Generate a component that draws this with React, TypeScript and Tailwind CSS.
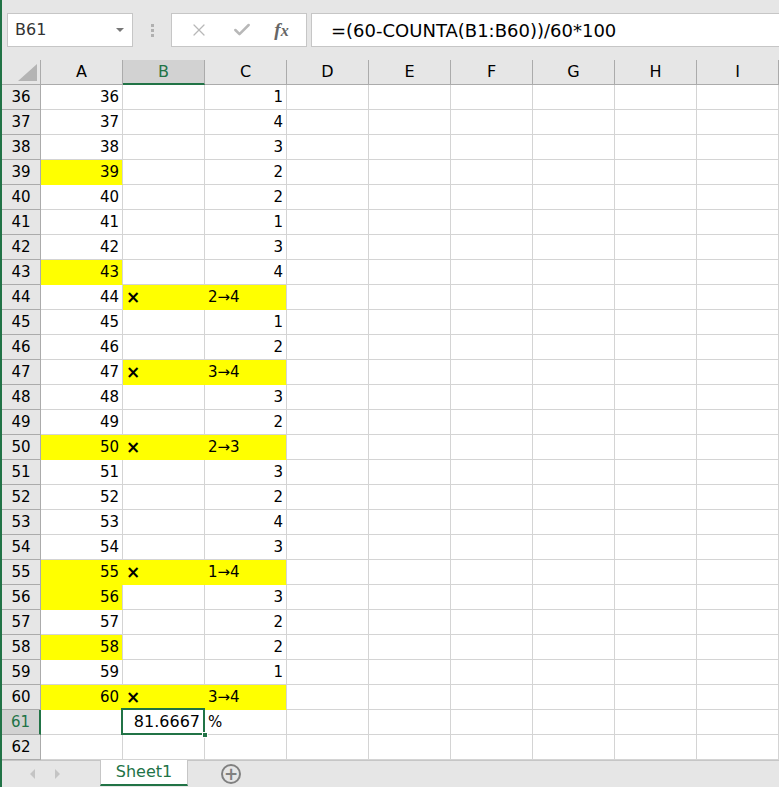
import { X, Check } from "lucide-react"

type Row = {
  n: number
  a?: string
  b?: string
  c?: string
  ya?: boolean
  yb?: boolean
  yc?: boolean
  cLeft?: boolean
}

const rows: Row[] = [
  { n: 36, a: "36", c: "1" },
  { n: 37, a: "37", c: "4" },
  { n: 38, a: "38", c: "3" },
  { n: 39, a: "39", c: "2", ya: true },
  { n: 40, a: "40", c: "2" },
  { n: 41, a: "41", c: "1" },
  { n: 42, a: "42", c: "3" },
  { n: 43, a: "43", c: "4", ya: true },
  { n: 44, a: "44", b: "×", c: "2→4", yb: true, yc: true, cLeft: true },
  { n: 45, a: "45", c: "1" },
  { n: 46, a: "46", c: "2" },
  { n: 47, a: "47", b: "×", c: "3→4", yb: true, yc: true, cLeft: true },
  { n: 48, a: "48", c: "3" },
  { n: 49, a: "49", c: "2" },
  { n: 50, a: "50", b: "×", c: "2→3", ya: true, yb: true, yc: true, cLeft: true },
  { n: 51, a: "51", c: "3" },
  { n: 52, a: "52", c: "2" },
  { n: 53, a: "53", c: "4" },
  { n: 54, a: "54", c: "3" },
  { n: 55, a: "55", b: "×", c: "1→4", ya: true, yb: true, yc: true, cLeft: true },
  { n: 56, a: "56", c: "3", ya: true },
  { n: 57, a: "57", c: "2" },
  { n: 58, a: "58", c: "2", ya: true },
  { n: 59, a: "59", c: "1" },
  { n: 60, a: "60", b: "×", c: "3→4", ya: true, yb: true, yc: true, cLeft: true },
  { n: 61, c: "%", cLeft: true },
  { n: 62 },
]

const cols = ["A", "B", "C", "D", "E", "F", "G", "H", "I"]
const font = { fontFamily: '"DejaVu Sans", "Noto Sans CJK JP", sans-serif' }

function Cell({ text, yellow, left, mark, nextYellow }: { text?: string; yellow?: boolean; left?: boolean; mark?: boolean; nextYellow?: boolean }) {
  // filled cells hide the gridline towards a filled neighbour
  const border = yellow && nextYellow ? "border-r-[#ffff00]" : "border-r-[#d4d4d4]"
  return (
    <div
      className={`w-[82px] h-[25px] shrink-0 border-r border-b border-b-[#d4d4d4] ${border} flex items-center text-[15px] text-black ${
        yellow ? "bg-[#ffff00] border-b-[#ffff00]" : "bg-white"
      } ${left ? "justify-start pl-[3px]" : "justify-end pr-[3px]"}`}
    >
      {mark ? <span className="font-bold text-[17px] leading-none">{text}</span> : text}
    </div>
  )
}

export default function App() {
  return (
    <div className="w-[779px] h-[787px] flex flex-col bg-[#e6e6e6] border-l-2 border-[#217346] overflow-hidden" style={font}>
      {/* formula bar */}
      <div className="h-[60px] shrink-0 flex items-start pt-[13px]">
        <div className="ml-[5px] w-[126px] h-[34px] bg-white border border-[#c6c6c6] flex items-center justify-between pl-[7px] pr-[8px]">
          <span className="text-[16px] text-[#333]">B61</span>
          <span className="w-0 h-0 border-l-[4px] border-r-[4px] border-t-[4px] border-l-transparent border-r-transparent border-t-[#777]" />
        </div>
        <div className="w-[38px] h-[34px] flex flex-col items-center justify-center gap-[2px]">
          <span className="w-[3px] h-[3px] bg-[#b0b0b0]" />
          <span className="w-[3px] h-[3px] bg-[#b0b0b0]" />
          <span className="w-[3px] h-[3px] bg-[#b0b0b0]" />
        </div>
        <div className="w-[136px] h-[34px] bg-white border border-[#c6c6c6] flex items-center justify-around px-[6px]">
          <X className="w-[20px] h-[20px] text-[#b8b8b8]" strokeWidth={1.5} />
          <Check className="w-[20px] h-[20px] text-[#b8b8b8]" strokeWidth={3} />
          <span className="text-[19px] italic font-bold text-[#666]" style={{ fontFamily: '"Liberation Serif", serif' }}>
            f<span className="text-[16px]">x</span>
          </span>
        </div>
        <div className="ml-[4px] flex-1 h-[34px] bg-white border border-[#c6c6c6] border-r-0 flex items-center pl-[19px] text-[18px] text-black">
          =(60-COUNTA(B1:B60))/60*100
        </div>
      </div>

      {/* sheet grid */}
      <div className="flex flex-col bg-white">
        <div className="flex h-[25px] bg-[#e6e6e6]">
          <div className="w-[39px] shrink-0 border-r border-b border-[#ababab] flex items-end justify-end pr-[3px] pb-[3px]">
            <svg width="19" height="17" viewBox="0 0 19 17">
              <polygon points="19,0 19,17 0,17" fill="#b4b4b4" />
            </svg>
          </div>
          {cols.map((c) => (
            <div
              key={c}
              className={`w-[82px] shrink-0 border-r border-[#ababab] flex items-center justify-center text-[16px] ${
                c === "B" ? "bg-[#d2d2d2] text-[#217346] border-b-2 border-b-[#217346]" : "text-black border-b"
              }`}
            >
              {c}
            </div>
          ))}
        </div>

        {rows.map((r) => (
          <div key={r.n} className="flex h-[25px]">
            <div
              className={`w-[39px] shrink-0 border-b border-b-[#ababab] flex items-center justify-center text-[15px] ${
                r.n === 61 ? "bg-[#d2d2d2] text-[#217346] border-r-2 border-r-[#217346]" : "bg-[#e6e6e6] text-black border-r border-r-[#ababab]"
              }`}
            >
              {r.n}
            </div>
            <Cell text={r.a} yellow={r.ya} nextYellow={r.yb} />
            {r.n === 61 ? (
              <div className="relative w-[82px] h-[25px] shrink-0 border-r border-b border-[#d4d4d4] bg-white flex items-center justify-end pr-[4px] text-[16px] text-black">
                81.6667
                <div className="absolute -left-[2px] -top-[2px] w-[84px] h-[27px] border-2 border-[#217346]" />
                <div className="absolute -right-[4px] -bottom-[4px] w-[6px] h-[6px] bg-[#217346] border border-white" />
              </div>
            ) : (
              <Cell text={r.b} yellow={r.yb} left mark nextYellow={r.yc} />
            )}
            <Cell text={r.c} yellow={r.yc} left={r.cLeft} />
            {cols.slice(3).map((c) => (
              <Cell key={c} />
            ))}
          </div>
        ))}
      </div>

      {/* sheet tabs */}
      <div className="flex-1 flex items-start border-t border-[#c6c6c6] bg-[#e6e6e6]">
        <div className="w-[98px] h-[25px] flex items-center gap-[20px] pl-[28px]">
          <span className="w-0 h-0 border-t-[5px] border-b-[5px] border-r-[5px] border-t-transparent border-b-transparent border-r-[#c4c4c4]" />
          <span className="w-0 h-0 border-t-[5px] border-b-[5px] border-l-[5px] border-t-transparent border-b-transparent border-l-[#c4c4c4]" />
        </div>
        <div className="-mt-px w-[88px] h-[26px] bg-white border-l border-r border-[#c6c6c6] border-b-2 border-b-[#217346] flex items-center justify-center text-[16px] text-[#217346]">
          Sheet1
        </div>
        <div className="ml-[33px] mt-[3px] w-[20px] h-[20px] rounded-full border-2 border-[#808080] flex items-center justify-center text-[#808080] text-[17px] leading-none font-bold">
          +
        </div>
      </div>
    </div>
  )
}
